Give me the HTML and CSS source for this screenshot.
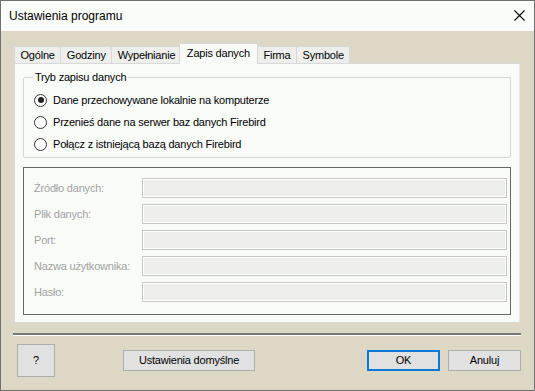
FILE: index.html
```html
<!DOCTYPE html>
<html lang="pl">
<head>
    <meta charset="UTF-8">
    <title>Ustawienia programu</title>
    <link rel="stylesheet" href="styles.css">
</head>
<body>
    <div class="window">
        <div class="titlebar">
            <span class="title">Ustawienia programu</span>
            <svg class="close" width="11" height="11" viewBox="0 0 11 11">
                <path d="M0.5 0.5 L10.5 10.5 M10.5 0.5 L0.5 10.5" stroke="#000" stroke-width="1.1" fill="none"/>
            </svg>
        </div>
        <div class="content">
            <div class="tabs">
                <div class="tab">Ogólne</div>
                <div class="tab">Godziny</div>
                <div class="tab">Wypełnianie</div>
                <div class="tab active">Zapis danych</div>
                <div class="tab">Firma</div>
                <div class="tab">Symbole</div>
            </div>
            <div class="panel">
                <fieldset class="group">
                    <legend>Tryb zapisu danych</legend>
                    <label class="radio-row"><span class="radio checked"></span>Dane przechowywane lokalnie na komputerze</label>
                    <label class="radio-row"><span class="radio"></span>Przenieś dane na serwer baz danych Firebird</label>
                    <label class="radio-row"><span class="radio"></span>Połącz z istniejącą bazą danych Firebird</label>
                </fieldset>
                <div class="conn-box">
                    <span class="field-label">Źródło danych:</span>
                    <div class="field"></div>
                    <span class="field-label">Plik danych:</span>
                    <div class="field"></div>
                    <span class="field-label">Port:</span>
                    <div class="field"></div>
                    <span class="field-label">Nazwa użytkownika:</span>
                    <div class="field"></div>
                    <span class="field-label">Hasło:</span>
                    <div class="field"></div>
                </div>
            </div>
            <div class="separator"></div>
        </div>
        <div class="footer">
            <button class="btn help">?</button>
            <button class="btn defaults">Ustawienia domyślne</button>
            <button class="btn ok">OK</button>
            <button class="btn cancel">Anuluj</button>
        </div>
    </div>
</body>
</html>
```

FILE: styles.css
```css
:root {
    --beige: #ddd8c5;
    --panel: #f9fbf9;
    --tab-bg: #eeefed;
    --tab-border: #d6d6d6;
}
body {
    margin: 0;
    font-family: "Liberation Sans", Arial, sans-serif;
    font-size: 11px;
    letter-spacing: -0.2px;
    color: #000000;
}
.window {
    width: 535px;
    height: 391px;
    box-sizing: border-box;
    border: 1px solid #6f6f6f;
    background: var(--beige);
    display: flex;
    flex-direction: column;
}
.titlebar {
    height: 30px;
    background: #fafcfa;
    display: flex;
    align-items: center;
    padding: 0 9px 0 8px;
    flex-shrink: 0;
}
.title {
    font-size: 12px;
    letter-spacing: 0;
    flex: 1;
    padding-bottom: 1px;
}
.close {
    margin-top: -1px;
}
.content {
    padding: 13px 14px 0 13px;
}
.tabs {
    display: flex;
    align-items: flex-end;
    height: 19px;
    position: relative;
    z-index: 1;
}
.tab {
    height: 16px;
    line-height: 16px;
    padding: 0 5.5px;
    background: var(--tab-bg);
    border: 1px solid var(--tab-border);
    border-bottom: none;
    margin-right: -1px;
}
.tab.active {
    height: 20px;
    line-height: 18px;
    background: var(--panel);
    margin: 0 -2px -1px -2px;
    padding: 0 7px;
}
.tab.active + .tab {
    margin-left: 1px;
}
.panel {
    height: 260px;
    box-sizing: border-box;
    background: var(--panel);
    border: 1px solid #d8d8d8;
    border-right-color: #e6e6e6;
    padding: 7px 8px 0 8px;
}
.group {
    margin: 0;
    height: 87px;
    box-sizing: border-box;
    border: 1px solid #d5d5d5;
    border-radius: 2px;
    padding: 5px 10px 0 10px;
}
.group legend {
    padding: 0 2px;
    margin-left: -1px;
    line-height: 13px;
}
.radio-row {
    display: flex;
    align-items: center;
    height: 22px;
}
.radio {
    width: 11px;
    height: 11px;
    border: 1px solid #333333;
    border-radius: 50%;
    background: #ffffff;
    margin-right: 6px;
    display: flex;
    align-items: center;
    justify-content: center;
}
.radio.checked::after {
    content: "";
    width: 6px;
    height: 6px;
    border-radius: 50%;
    background: #222222;
}
.conn-box {
    margin-top: 9px;
    height: 148px;
    box-sizing: border-box;
    border: 1px solid #666666;
    padding: 10px 3px 0 10px;
    display: grid;
    grid-template-columns: 108px 1fr;
    grid-auto-rows: 20px;
    row-gap: 6px;
    align-items: center;
}
.field-label {
    color: #a2a2a2;
}
.field {
    height: 20px;
    box-sizing: border-box;
    border: 1px solid #c6c8c6;
    box-shadow: inset 0 0 0 1px #ffffff;
    background: #eeefec;
}
.separator {
    margin: 10px -1px 0 -1px;
    border-top: 2px solid #767676;
    border-bottom: 1px solid #ffffff;
}
.footer {
    display: flex;
    align-items: center;
    padding: 7px 13px 0 16px;
    height: 34px;
}
.btn {
    font-family: "Liberation Sans", Arial, sans-serif;
    font-size: 11px;
    letter-spacing: -0.2px;
    color: #000000;
    background: #e1e1e1;
    border: 1px solid #adadad;
    height: 21px;
    padding: 0;
}
.btn.help {
    width: 38px;
    height: 33px;
}
.btn.defaults {
    width: 132px;
    margin-left: 68px;
}
.btn.ok {
    width: 73px;
    margin-left: auto;
    border: 2px solid #0a78d4;
}
.btn.cancel {
    width: 73px;
    margin-left: 8px;
}
```
